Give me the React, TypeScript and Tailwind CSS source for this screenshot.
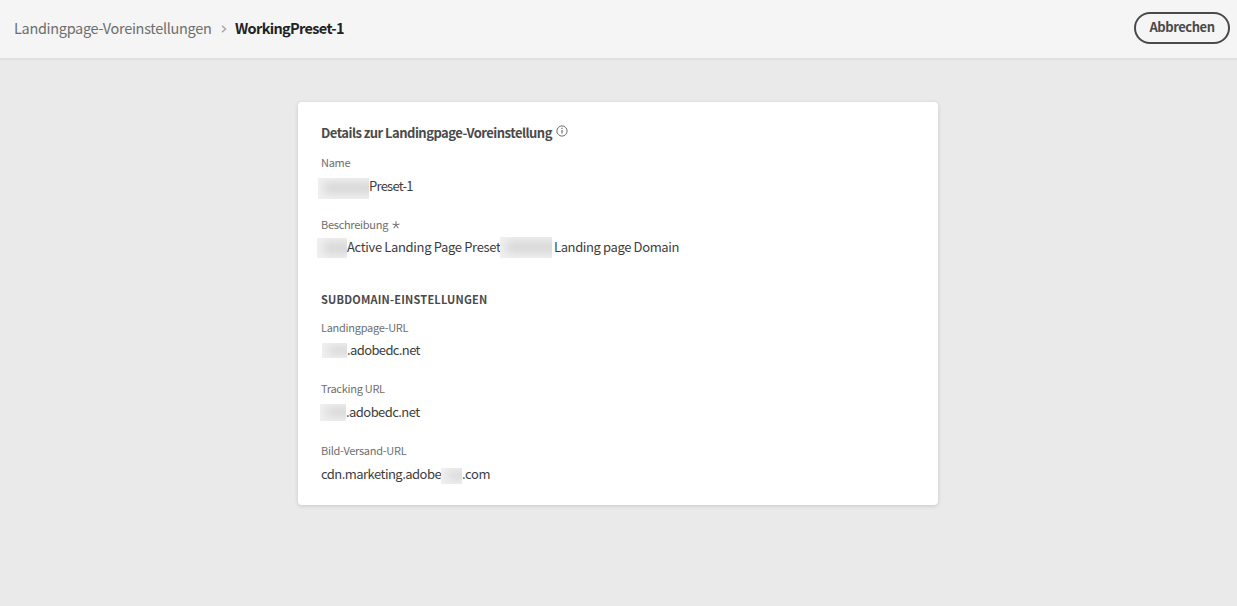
import type { ReactNode } from 'react';

function Label({ children, className = '' }: { children: ReactNode; className?: string }) {
  return <div className={`flex h-5 items-center pb-[2px] whitespace-nowrap text-[11px] leading-[18px] tracking-[-0.28px] text-[#6e6e6e] ${className}`}>{children}</div>;
}

function Value({ children, className = '' }: { children: ReactNode; className?: string }) {
  return <div className={`flex h-5 items-center whitespace-nowrap text-[13px] leading-5 text-[#3d3d3d] ${className}`}>{children}</div>;
}

function Redacted({ className = '' }: { className?: string }) {
  return (
    <span className={`flex shrink-0 items-center overflow-hidden bg-[#f1f1f1] ${className}`}>
      <span className="-mr-2 ml-[6px] h-3/5 flex-1 bg-[#d6d6d6] blur-[5px]" />
    </span>
  );
}

export default function App() {
  return (
    <div className="flex h-[606px] w-full flex-col overflow-hidden bg-[#eaeaea] font-['Noto_Sans_CJK_SC','Noto_Sans',sans-serif]">
      <header className="flex h-[60px] shrink-0 items-start justify-between border-b-2 border-[#e0e0e0] bg-[#f5f5f5] pr-[7px] pl-[14px]">
        <nav className="flex h-[57px] items-center whitespace-nowrap text-[14.5px]">
          <span className="w-[198px] pb-[2px] tracking-[-0.32px] text-[#6e6e6e]">Landingpage-Voreinstellungen</span>
          <svg className="ml-[9px] h-2 w-[6px]" viewBox="0 0 6 8" fill="none" stroke="#a8a8a8" strokeWidth="1.5">
            <path d="M1 .7 4.5 4 1 7.3" />
          </svg>
          <span className="ml-[8px] pb-[2px] font-bold tracking-[-0.67px] text-[#222]">WorkingPreset-1</span>
        </nav>
        <button className="mt-3 flex h-8 w-24 items-center justify-center rounded-full border-2 border-[#4a4a4a] pb-[2px] text-[13px] leading-5 font-bold tracking-[-0.45px] text-[#4a4a4a]">
          Abbrechen
        </button>
      </header>
      <main className="flex justify-center pt-[42px] pr-px">
        <section className="h-[403px] w-[640px] rounded-[4px] bg-white pt-[21px] pl-[23px] shadow-[0_1px_4px_rgba(0,0,0,0.15)]">
          <h1 className="flex h-5 items-center whitespace-nowrap text-[13px] leading-5 font-bold tracking-[-0.52px] text-[#4a4a4a]">
            <span className="w-[232px]">Details zur Landingpage-Voreinstellung</span>
            <svg className="mb-[5px] ml-[3px] h-3 w-3" viewBox="0 0 12 12" fill="none" stroke="#6e6e6e">
              <circle cx="6" cy="6" r="5.1" />
              <path d="M6 5v3.500M6 2.800v1.300" strokeWidth="1.2" />
            </svg>
          </h1>
          <Label className="mt-[10px]">Name</Label>
          <Value className="mt-[3px]">
            <Redacted className="-ml-[3px] mt-[4px] h-[21px] w-[51px]" />
            <span className="tracking-[-0.75px]">Preset-1</span>
          </Value>
          <Label className="mt-[19px]">
            <span className="w-[67px]">Beschreibung</span>
            <svg className="mt-px ml-[4px] h-2 w-2" viewBox="0 0 8 8" stroke="#777" strokeWidth="1.1">
              <path d="M4 .3V4M4 4 .5 3M4 4l3.500-1M4 4 1.700 7.200M4 4l2.300 3.200" />
            </svg>
          </Label>
          <Value className="mt-[2px]">
            <Redacted className="-ml-[4px] mt-[2px] h-[20px] w-[30px]" />
            <span className="w-[153px] tracking-[-0.34px]">Active Landing Page Preset</span>
            <Redacted className="h-[21px] w-[52px]" />
            <span className="ml-[2px] tracking-[-0.38px]">Landing page Domain</span>
          </Value>
          <h2 className="mt-[32px] h-5 text-[11px] leading-5 font-bold tracking-[0.2px] whitespace-nowrap text-[#4a4a4a]">SUBDOMAIN-EINSTELLUNGEN</h2>
          <Label className="mt-[9px]">Landingpage-URL</Label>
          <Value className="mt-[2px]">
            <Redacted className="ml-px mt-px h-[15px] w-[25px]" />
            <span className="tracking-[-0.62px]">.adobedc.net</span>
          </Value>
          <Label className="mt-[19px]">Tracking URL</Label>
          <Value className="mt-[3px]">
            <Redacted className="-ml-px h-[17px] w-[26px]" />
            <span className="tracking-[-0.56px]">.adobedc.net</span>
          </Value>
          <Label className="mt-[19px]">Bild-Versand-URL</Label>
          <Value className="mt-[3px]">
            <span className="w-[120px] tracking-[-0.53px]">cdn.marketing.adobe</span>
            <Redacted className="mt-[3px] h-[16px] w-[21px]" />
            <span className="tracking-[-0.34px]">.com</span>
          </Value>
        </section>
      </main>
    </div>
  );
}
